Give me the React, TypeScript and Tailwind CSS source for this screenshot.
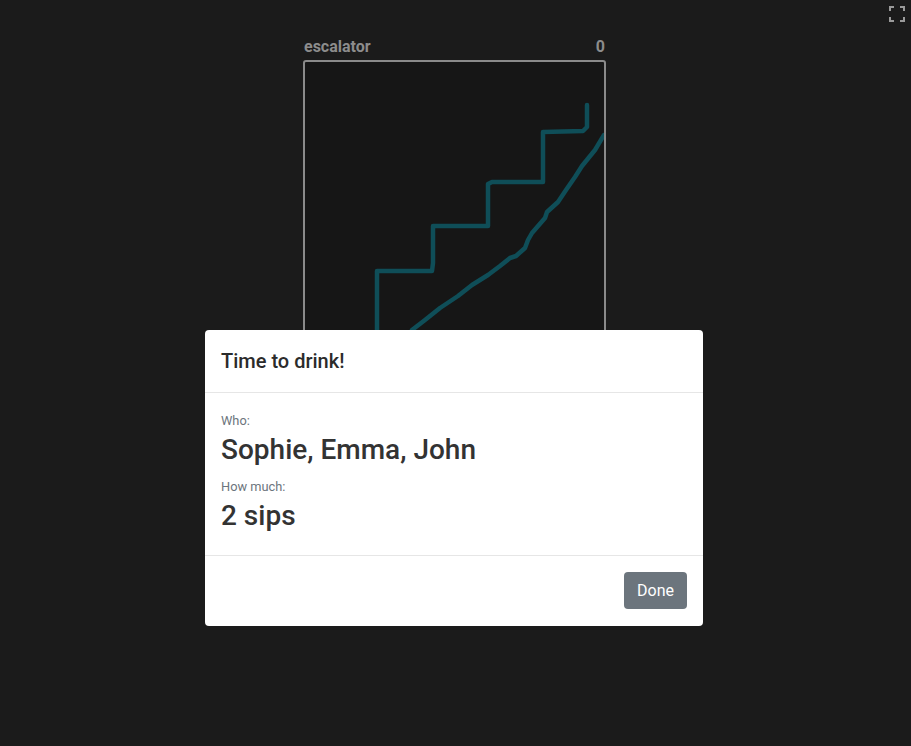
import React from "react";

const stairs = "M377 340 L377 271 L432 271 L433 263 L433 226 L488 226 L488 184 L492 182 L543 182 L543 132 L583 131 L587 127 L587 105";
const slope =
  "M395 360 L412 330 L425 320 L440 308 L458 296 L472 285 L488 275 L500 266 L510 258 L516 256 L525 248 L528 240 L532 233 L545 218 L547 212 L558 202 L566 190 L575 177 L582 166 L595 150 L604 135";

function FullscreenIcon() {
  return (
    <svg width="16" height="16" viewBox="0 0 16 16" fill="none" stroke="#9a9a9a" strokeWidth="2">
      <path d="M1 5 V1 H5" />
      <path d="M11 1 H15 V5" />
      <path d="M15 11 V15 H11" />
      <path d="M5 15 H1 V11" />
    </svg>
  );
}

function Board() {
  return (
    <div className="flex justify-center pr-[2px] pt-[37px]">
      <div className="w-[303px]">
        <div className="flex items-center justify-between px-[1px] text-[16px] font-bold leading-[20px] text-[#8c8c8c]">
          <span>escalator</span>
          <span>0</span>
        </div>
        <div className="relative mt-[3px] h-[400px] w-[303px] overflow-hidden rounded-[3px] border-2 border-[#8a8a8a] bg-[#161616]">
          <svg
            className="absolute left-[-2px] top-[-2px]"
            width="303"
            height="400"
            viewBox="303 60 303 400"
            fill="none"
            stroke="#0f4e58"
            strokeWidth="4.5"
            strokeLinecap="round"
            strokeLinejoin="round"
          >
            <path d={stairs} />
            <path d={slope} />
          </svg>
        </div>
      </div>
    </div>
  );
}

function DrinkModal() {
  return (
    <div className="fixed inset-0 flex justify-center pr-[3px] pt-[330px]">
      <div className="h-fit w-[498px] rounded-[4px] bg-white text-[#333]">
        <div className="border-b border-[#e6e6e6] p-4">
          <h5 className="text-[20px] leading-[30px] font-medium text-[#2b2b2b]">Time to drink!</h5>
        </div>
        <div className="px-4 pt-4 pb-[14px]">
          <div className="text-[12.8px] leading-[24px] text-[#6c757d]">Who:</div>
          <h3 className="mb-2 text-[28px] leading-[34px] font-medium text-[#333]">Sophie, Emma, John</h3>
          <div className="text-[12.8px] leading-[24px] text-[#6c757d]">How much:</div>
          <h3 className="mb-2 text-[28px] leading-[34px] font-medium text-[#333]">2 sips</h3>
        </div>
        <div className="flex justify-end border-t border-[#e6e6e6] px-4 pt-4 pb-[17px]">
          <button className="h-[37px] rounded-[4px] bg-[#6c757d] px-[13px] text-[16px] text-white">Done</button>
        </div>
      </div>
    </div>
  );
}

export default function App() {
  return (
    <div className="relative h-[746px] w-full overflow-hidden bg-[#1b1b1b]" style={{ fontFamily: "Roboto, 'Liberation Sans', sans-serif" }}>
      <div className="absolute right-[6px] top-[6px]">
        <FullscreenIcon />
      </div>
      <Board />
      <DrinkModal />
    </div>
  );
}
